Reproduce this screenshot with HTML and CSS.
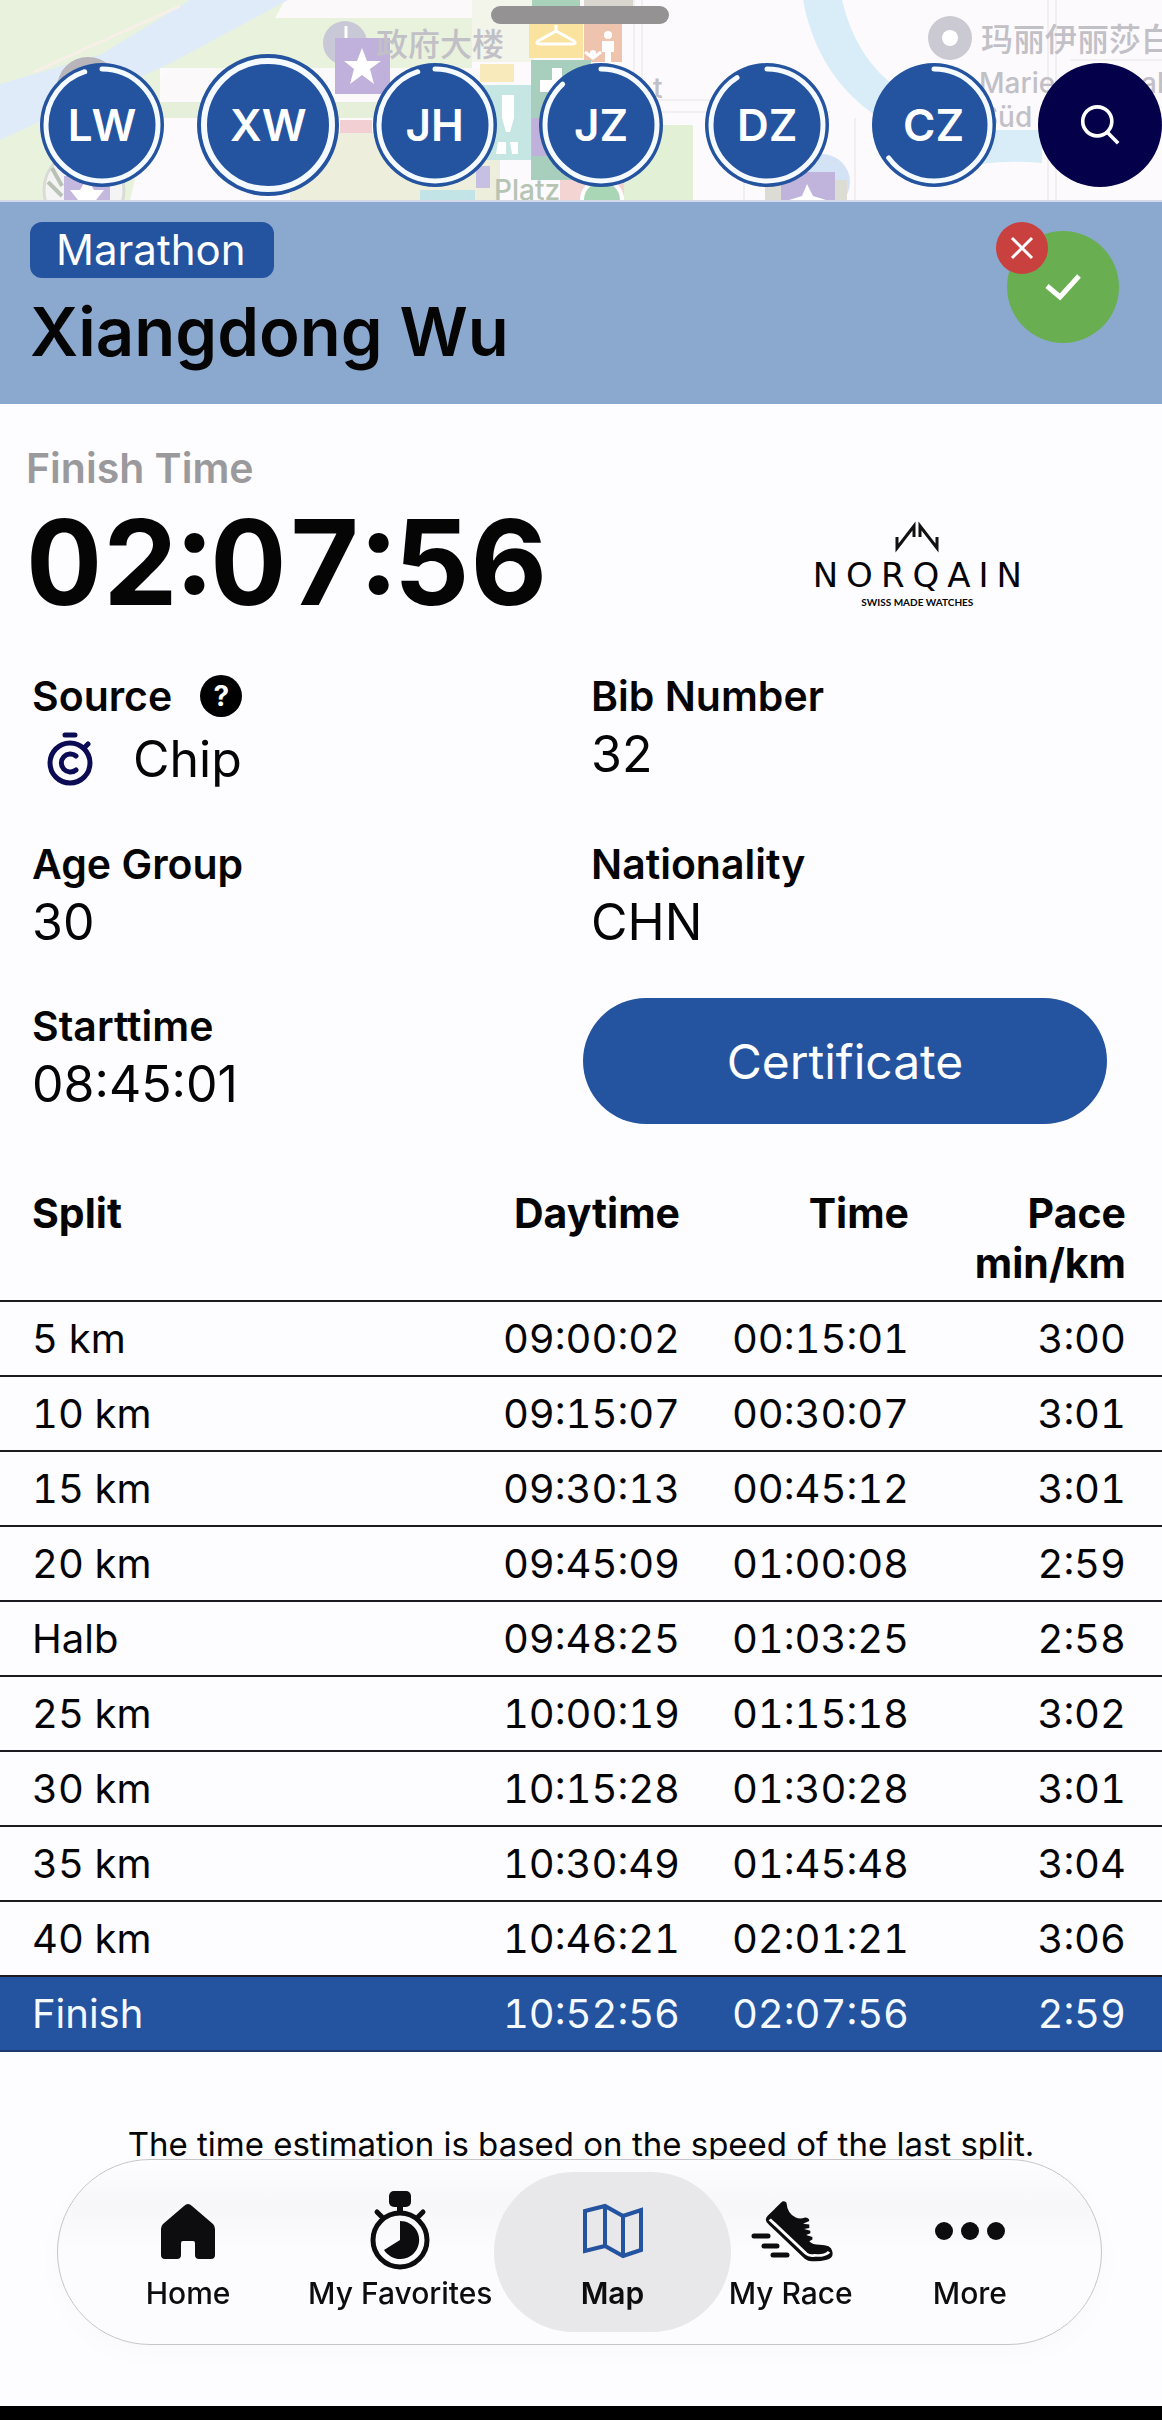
FILE: index.html
```
<!DOCTYPE html>
<html lang="en">
<head>
  <meta charset="UTF-8">
  <meta name="viewport" content="width=device-width, initial-scale=1.0">
  <title>Xiangdong Wu - Marathon</title>
  <link rel="stylesheet" href="styles.css">
</head>
<body>
  <div class="map-strip">
    <svg class="map" viewBox="0 0 1162 200" preserveAspectRatio="xMinYMin slice" aria-hidden="true">
      <rect width="1162" height="200" fill="#fcfafc"/>
      <path d="M0 0H480V22H275L170 68H160V200H0Z" fill="#e9f2dd"/>
      <path d="M285 0H472V18H275Z" fill="#fbf9fa"/>
      <path d="M275 18H472V68H170Z" fill="#e9f2dd"/>
      <path d="M190 0H288L165 66L60 112L0 140V84L100 55Z" fill="#dfebf8"/>
      <path d="M34 72L180 6" stroke="#f7efe8" stroke-width="3"/>
      <path d="M170 68H480V100H160V78Z" fill="#fbf9fa"/>
      <path d="M160 102H480V118H160Z" fill="#e6efd9"/>
      <path d="M150 120H345V200H130Z" fill="#fcfafc"/>
      <path d="M290 132H500V200H290Z" fill="#eeeedd"/>
      <path d="M340 120H372V133H340Z" fill="#f2cfd3"/>
      <circle cx="88" cy="88" r="31" fill="#b8b6ba"/>
      <circle cx="84" cy="190" r="40" fill="#f4f4f4" stroke="#d9dcd6" stroke-width="3"/>
      <path d="M52 168L62 186M48 182L62 196" stroke="#b9c2b4" stroke-width="4"/>
      <rect x="64" y="176" width="46" height="24" fill="#c4b8de"/>
      <path d="M70 190H80L87 178L94 190H104L96 200H78Z" fill="#fff"/>
      <circle cx="345" cy="43" r="22" fill="#c8c8d6"/>
      <path d="M346 26V38" stroke="#fff" stroke-width="3"/>
      <rect x="335" y="38" width="55" height="56" fill="#c0b0dc"/>
      <path d="M362 48L367 61H381L370 69L374 84L362 75L350 84L354 69L344 61H357Z" fill="#fff"/>
      <path d="M472 0H534V62H472Z" fill="#f3f5ea"/>
      <path d="M532 0H580V8H532Z" fill="#a9d2ba"/>
      <path d="M584 0H634V22H584Z" fill="#d9d6cf"/>
      <rect x="529" y="22" width="54" height="36" fill="#fae39f"/>
      <path d="M556 25V31L538 41Q535 44 540 44H572Q577 44 574 41L556 31" fill="none" stroke="#fff" stroke-width="3"/>
      <rect x="584" y="22" width="38" height="40" fill="#efc4ae"/>
      <circle cx="608" cy="35" r="4" fill="#fff"/>
      <path d="M602 41H614V52H611V64H605V52H602Z" fill="#fff"/>
      <circle cx="593" cy="53" r="3" fill="#fff"/>
      <path d="M585 52L593 58L601 52" stroke="#fff" stroke-width="3" fill="none"/>
      <rect x="480" y="64" width="34" height="18" fill="#f9eabb"/>
      <rect x="531" y="60" width="60" height="120" fill="#a8cfbd"/>
      <path d="M552 68H562V80H572V92H540V80H552Z" fill="#fff"/>
      <rect x="478" y="85" width="53" height="75" fill="#c6e6e3"/>
      <path d="M502 95H514V118L510 132H506L502 118Z" fill="#fff"/>
      <path d="M498 142H506V154H496ZM510 142H518V154H512Z" fill="#fff"/>
      <rect x="532" y="118" width="16" height="38" fill="#c0b0dc"/>
      <path d="M420 190H475V200H420Z" fill="#c2e4e6"/>
      <rect x="476" y="166" width="14" height="22" fill="#c6c0e2"/>
      <path d="M560 180H640V200H560Z" fill="#f4d4d2"/>
      <circle cx="602" cy="200" r="20" fill="#a9d6b4" stroke="#fff" stroke-width="4"/>
      <path d="M640 125H693V200H624V150Z" fill="#e2f1d6"/>
      <path d="M634 0V100M642 0V110M640 100H710L830 112M640 112H800M1048 0V200M1056 0V200M855 118V200M744 150V200M1070 60H1162" stroke="#f1eff2" stroke-width="2" fill="none"/>
      <path d="M803 0H842Q856 60 900 90V130Q820 90 803 0Z" fill="#d8edf8"/>
      <path d="M980 130H1042V163Q1010 160 980 164Z" fill="#d8edf8"/>
      <circle cx="822" cy="182" r="28" fill="#d4e2f6"/>
      <rect x="765" y="180" width="82" height="20" fill="#dcdcd4"/>
      <rect x="781" y="172" width="54" height="28" fill="#c0b4dc"/>
      <path d="M789 200L802 196L807 184L813 196L826 200Z" fill="#fff"/>
      <circle cx="950" cy="38" r="22" fill="#cbc9d2"/>
      <circle cx="950" cy="38" r="8" fill="#fff"/>
      <g class="map-label">
        <text x="376" y="56" class="map-cjk">政府大楼</text>
        <text x="981" y="51" class="map-cjk">玛丽伊丽莎白</text>
        <text x="979" y="93">Marie</text>
        <text x="1141" y="93">ab</text>
        <text x="980" y="127">Süd</text>
        <text x="653" y="98">t</text>
        <text x="494" y="200" class="map-green">Platz</text>
      </g>
    </svg>
    <div class="handle"></div>
    <div class="athletes">
      <button class="athlete">
        <svg viewBox="0 0 124 124"><circle cx="62" cy="62" r="56" pathLength="100" stroke-dasharray="95 100"/></svg>
        <span>LW</span>
      </button>
      <button class="athlete active">
        <svg viewBox="0 0 142 142"><circle cx="71" cy="71" r="64"/></svg>
        <span>XW</span>
      </button>
      <button class="athlete">
        <svg viewBox="0 0 124 124"><circle cx="62" cy="62" r="56" pathLength="100" stroke-dasharray="95 100"/></svg>
        <span>JH</span>
      </button>
      <button class="athlete">
        <svg viewBox="0 0 124 124"><circle cx="62" cy="62" r="56" pathLength="100" stroke-dasharray="88 100"/></svg>
        <span>JZ</span>
      </button>
      <button class="athlete">
        <svg viewBox="0 0 124 124"><circle cx="62" cy="62" r="56" pathLength="100" stroke-dasharray="91 100"/></svg>
        <span>DZ</span>
      </button>
      <button class="athlete">
        <svg viewBox="0 0 124 124"><circle cx="62" cy="62" r="56" pathLength="100" stroke-dasharray="65 100"/></svg>
        <span>CZ</span>
      </button>
      <button class="search" aria-label="Search">
        <svg viewBox="0 0 44 44" width="40" height="40"><circle cx="19" cy="18" r="16"/><path d="M30 30L42 42"/></svg>
      </button>
    </div>
  </div>

  <header class="runner">
    <div>
      <span class="race">Marathon</span>
      <h1>Xiangdong Wu</h1>
    </div>
    <div class="status">
      <button class="confirm" aria-label="Following">
        <svg viewBox="0 0 36 28" width="36" height="28"><path d="M2 13L15 24L34 3"/></svg>
      </button>
      <button class="remove" aria-label="Remove">
        <svg viewBox="0 0 22 22" width="22" height="22"><path d="M1 1L21 21M21 1L1 21"/></svg>
      </button>
    </div>
  </header>

  <main>
    <section class="finish">
      <div>
        <h2>Finish Time</h2>
        <p class="finish-time">02:07:56</p>
      </div>
      <div class="sponsor">
        <svg viewBox="0 0 44 26" width="44" height="26" aria-hidden="true"><path d="M2 13V24L19 2V13M25 13V2L42 24V13"/></svg>
        <span class="sponsor-name">NORQAIN</span>
        <span class="sponsor-claim">SWISS MADE WATCHES</span>
      </div>
    </section>

    <section class="details">
      <div class="detail">
        <h3>Source <button class="help" aria-label="Help">?</button></h3>
        <p class="source">
          <svg viewBox="0 0 46 54" width="46" height="54" aria-hidden="true"><circle cx="23" cy="31" r="20"/><path d="M18 3H28M38 15L41 12M29 24A9 9 0 1 0 29 38"/></svg>
          Chip
        </p>
      </div>
      <div class="detail">
        <h3>Bib Number</h3>
        <p>32</p>
      </div>
      <div class="detail">
        <h3>Age Group</h3>
        <p>30</p>
      </div>
      <div class="detail">
        <h3>Nationality</h3>
        <p>CHN</p>
      </div>
      <div class="detail">
        <h3>Starttime</h3>
        <p>08:45:01</p>
      </div>
      <button class="certificate">Certificate</button>
    </section>

    <table class="splits">
      <thead>
        <tr><th>Split</th><th>Daytime</th><th>Time</th><th>Pace<br>min/km</th></tr>
      </thead>
      <tbody>
        <tr><td>5 km</td><td>09:00:02</td><td>00:15:01</td><td>3:00</td></tr>
        <tr><td>10 km</td><td>09:15:07</td><td>00:30:07</td><td>3:01</td></tr>
        <tr><td>15 km</td><td>09:30:13</td><td>00:45:12</td><td>3:01</td></tr>
        <tr><td>20 km</td><td>09:45:09</td><td>01:00:08</td><td>2:59</td></tr>
        <tr><td>Halb</td><td>09:48:25</td><td>01:03:25</td><td>2:58</td></tr>
        <tr><td>25 km</td><td>10:00:19</td><td>01:15:18</td><td>3:02</td></tr>
        <tr><td>30 km</td><td>10:15:28</td><td>01:30:28</td><td>3:01</td></tr>
        <tr><td>35 km</td><td>10:30:49</td><td>01:45:48</td><td>3:04</td></tr>
        <tr><td>40 km</td><td>10:46:21</td><td>02:01:21</td><td>3:06</td></tr>
        <tr class="total"><td>Finish</td><td>10:52:56</td><td>02:07:56</td><td>2:59</td></tr>
      </tbody>
    </table>

    <p class="note">The time estimation is based on the speed of the last split.</p>
  </main>

  <nav class="tabs">
    <a href="#home">
      <svg viewBox="0 -1 80 80" width="80" height="80"><path d="M40 14Q42 14 44 16L65 34Q67 36 67 39V65Q67 69 63 69H51Q47 69 47 65V53Q47 51 45 51H35Q33 51 33 53V65Q33 69 29 69H17Q13 69 13 65V39Q13 36 15 34L36 16Q38 14 40 14Z"/></svg>
      Home
    </a>
    <a href="#favorites">
      <svg viewBox="0 -1 80 80" width="80" height="80"><rect x="29" y="1" width="22" height="16" rx="5"/><path d="M37 15H43V23H37Z"/><circle cx="40" cy="50" r="27" fill="none" stroke="#0d0d0f" stroke-width="5"/><path d="M40 31A19 19 0 1 1 24 60L40 50Z"/><path d="M17 22L23 28M63 22L57 28" stroke="#0d0d0f" stroke-width="5" stroke-linecap="round"/></svg>
      My Favorites
    </a>
    <a href="#map" class="current">
      <svg viewBox="0 0 80 80" width="80" height="80"><path d="M12 22L32 17L50 27L68 21V61L50 67L32 57L12 62ZM32 17V57M50 27V67" fill="none" stroke="#24539f" stroke-width="4"/></svg>
      Map
    </a>
    <a href="#race">
      <svg viewBox="0 0 80 80" width="80" height="80"><g transform="matrix(1.04 0 0 .88 -1 3)"><path d="M30 12Q32 9 35 12Q36 25 44 29Q48 31 53 29Q57 29 57 33L51 36L57 37V41L52 42L58 44V47L54 49L60 51V54L57 56Q60 60 67 60Q78 60 79 67Q81 75 74 77Q64 80 56 78Q53 77 50 73L18 37Q13 32 17 27Z"/><path d="M19 31L54 70Q57 73 62 72Q72 73 76 68" fill="none" stroke="#fcfbfd" stroke-width="3"/></g><path d="M3 47H17M13 57H26M22 66H36" stroke="#0d0d0f" stroke-width="5" stroke-linecap="round"/></svg>
      My Race
    </a>
    <a href="#more">
      <svg viewBox="0 0 80 80" width="80" height="80"><circle cx="14" cy="42" r="9"/><circle cx="40" cy="42" r="9"/><circle cx="66" cy="42" r="9"/></svg>
      More
    </a>
  </nav>
  <footer></footer>
</body>
</html>
```
FILE: styles.css
```
* { box-sizing: border-box; }
body {
  display: flex;
  flex-direction: column;
  min-height: 100vh;
  margin: 0;
  background: #fdfcfe;
  color: #050506;
  font-family: Inter, "Noto Sans CJK SC", sans-serif;
}
h1, h2, h3, p { margin: 0; }
button {
  padding: 0;
  border: none;
  font-family: inherit;
  color: #fff;
  cursor: pointer;
}
svg {
  display: block;
  overflow: visible;
}

.map-strip {
  position: relative;
  height: 202px;
  border-bottom: 2px solid #d3d9ea;
  overflow: hidden;
}
.map {
  position: absolute;
  width: 100%;
  height: 100%;
}
.map-label {
  font-size: 28px;
  font-weight: 500;
  fill: #c2c0c7;
}
.map-cjk { font-size: 32px; }
.map-green { fill: #b5c4b3; }
.handle {
  position: absolute;
  top: 6px;
  left: 50%;
  width: 178px;
  height: 18px;
  margin-left: -90px;
  border-radius: 9px;
  background: #949293;
}
.athletes {
  position: relative;
  display: flex;
  justify-content: space-between;
  align-items: center;
  height: 202px;
  padding: 48px 0 0 40px;
}
.athlete, .search {
  display: grid;
  place-items: center;
  width: 124px;
  height: 124px;
  flex: none;
  border-radius: 50%;
  background: #24539f;
  font-size: 44px;
  font-weight: 600;
}
.athlete svg, .athlete span { grid-area: 1 / 1; }
.athlete circle {
  fill: none;
  stroke: #f4faff;
  stroke-width: 5;
  stroke-linecap: round;
  transform: rotate(-90deg);
  transform-origin: center;
}
.athlete.active {
  width: 142px;
  height: 142px;
  margin: 0 -9px;
}
.athlete.active circle { stroke-width: 6; }
.search { background: #05004a; }
.search svg { fill: none; stroke: #fff; stroke-width: 4; }

.runner {
  display: flex;
  justify-content: space-between;
  padding: 20px 43px 32px 30px;
  background: #8ba9cf;
}
.race {
  display: inline-block;
  padding: 0 28px 0 26px;
  border-radius: 12px;
  background: #24539f;
  color: #fff;
  font-size: 42px;
  line-height: 56px;
}
.runner h1 {
  margin-top: 14px;
  font-size: 67px;
  font-weight: 600;
  line-height: 80px;
}
.status {
  position: relative;
  padding-top: 9px;
}
.confirm, .remove {
  display: grid;
  place-items: center;
  border-radius: 50%;
}
.confirm {
  width: 112px;
  height: 112px;
  background: #69af52;
}
.remove {
  position: absolute;
  top: 0;
  left: -11px;
  width: 52px;
  height: 52px;
  background: #c8413f;
}
.status svg { fill: none; stroke: #fff; stroke-width: 5; }
.remove svg { stroke-width: 3; }

.finish {
  display: flex;
  justify-content: space-between;
  padding: 40px 132px 0 26px;
}
.finish h2 {
  color: #9a999c;
  font-size: 41px;
  font-weight: 600;
  line-height: 48px;
}
.finish-time {
  font-size: 118px;
  font-weight: 700;
  font-variant-numeric: tabular-nums;
  line-height: 140px;
}
.sponsor {
  display: flex;
  flex-direction: column;
  align-items: center;
  padding-top: 80px;
}
.sponsor svg { fill: none; stroke: #111; stroke-width: 3; }
.sponsor-name {
  margin-top: 8px;
  padding-left: 8px;
  font-family: "DejaVu Sans", sans-serif;
  font-size: 34px;
  line-height: 34px;
  letter-spacing: 8px;
}
.sponsor-claim {
  font-family: Lato, sans-serif;
  font-size: 10px;
  font-weight: 700;
  line-height: 20px;
}

.details {
  display: grid;
  grid-template-columns: 551px 1fr;
  row-gap: 42px;
  padding: 36px 55px 0 32px;
}
.detail h3 {
  display: flex;
  align-items: center;
  gap: 28px;
  font-size: 41px;
  font-weight: 600;
  line-height: 56px;
}
.detail:nth-child(even) { padding-left: 8px; }
.detail p {
  padding-bottom: 4px;
  font-size: 50px;
  line-height: 60px;
}
.help {
  width: 42px;
  height: 42px;
  border-radius: 50%;
  background: #000;
  font-size: 28px;
  font-weight: 700;
  line-height: 42px;
}
.detail .source {
  display: flex;
  align-items: center;
  gap: 40px;
  padding: 0 0 0 15px;
  line-height: 70px;
}
.source svg {
  fill: none;
  stroke: #0c0c55;
  stroke-width: 5;
  stroke-linecap: round;
}
.certificate {
  height: 126px;
  border-radius: 63px;
  background: #24539f;
  font-size: 48px;
}

.splits {
  width: 100%;
  margin-top: 64px;
  border-collapse: collapse;
  table-layout: fixed;
  font-size: 40px;
  font-variant-numeric: tabular-nums;
  text-align: right;
}
.splits th {
  padding: 0 0 12px;
  font-size: 41px;
  font-weight: 700;
  line-height: 50px;
  vertical-align: top;
}
.splits td {
  height: 75px;
  padding: 0;
  border-top: 2px solid #1c1c20;
  line-height: 50px;
}
.splits th:first-child, .splits td:first-child {
  padding-left: 32px;
  text-align: left;
}
.splits th:nth-child(2) { width: 260px; }
.splits th:nth-child(3) { width: 229px; }
.splits th:last-child { width: 253px; }
.splits th:last-child, .splits td:last-child { padding-right: 36px; }
.splits .total {
  border-bottom: 2px solid #1c3a70;
  background: #24539f;
  color: #f4faff;
}

.note {
  padding: 70px 0 200px;
  font-size: 33px;
  line-height: 44px;
  text-align: center;
}

.tabs {
  position: fixed;
  bottom: 75px;
  left: 57px;
  right: 60px;
  display: grid;
  grid-template-columns: 212fr 212fr 212fr 144fr 214fr;
  padding: 12px 24px;
  border: 1px solid #c6c5c8;
  border-radius: 93px;
  background: linear-gradient(#fdfcfe, #f7f6f8 25%, #fcfbfd 50%);
  box-shadow: 0 8px 30px rgba(0, 0, 0, 0.02);
}
.tabs a {
  display: flex;
  flex-direction: column;
  align-items: center;
  gap: 4px;
  padding: 17px 0 19px;
  border-radius: 80px;
  color: #0d0d0f;
  font-size: 30px;
  font-weight: 500;
  line-height: 40px;
  text-decoration: none;
  white-space: nowrap;
}
.tabs svg { fill: #0d0d0f; }
.tabs .current {
  margin: 0 -12px;
  background: #e8e7e9;
  font-weight: 600;
}
footer {
  height: 14px;
  margin-top: auto;
  background: #000;
}
```
